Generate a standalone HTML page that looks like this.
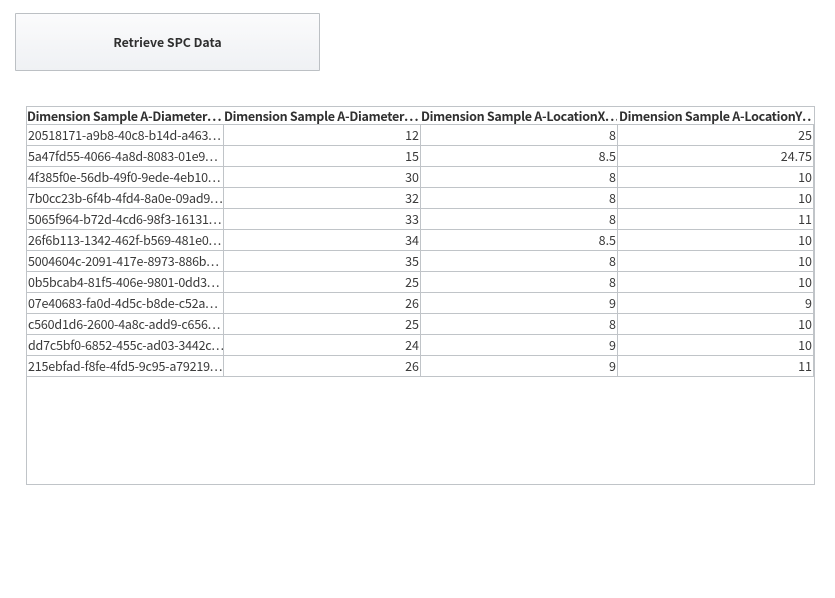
<!DOCTYPE html>
<html><head><meta charset="utf-8"><style>
html,body{margin:0;padding:0;background:#fff;width:835px;height:598px;overflow:hidden}
body{position:relative;font-family:"Noto Sans CJK SC","DejaVu Sans",sans-serif;color:#3a3a3a;font-size:12px}
.btn{position:absolute;left:15px;top:13px;width:303px;height:56px;border:1px solid #bcc0c4;border-radius:1px;background:linear-gradient(#fbfbfc,#eff1f4);text-align:center;line-height:56px;font-weight:bold;font-size:12.3px;color:#2f2f2f}
.tbl{position:absolute;left:26px;top:106px;width:787px;height:377px;border:1px solid #c0c4c8;box-sizing:content-box}
.h,.c,.r{position:absolute;white-space:nowrap;overflow:hidden;height:20px;line-height:20px}
.hb{position:absolute;left:27px;top:107px;width:786px;height:17px;background:#fff;border-bottom:1px solid #c0c4c8}
.h{font-weight:bold;font-size:12.5px;letter-spacing:-.28px;top:107px;height:17px;line-height:18px;color:#303030}
.c{font-size:12.5px;letter-spacing:-.2px;left:28px;width:195px}
.r{text-align:right;font-size:12.5px}
.e{letter-spacing:1.1px}
.lh{position:absolute;left:27px;width:786px;height:1px;background:#c0c4c8}
.lv{position:absolute;top:124px;width:1px;height:253px;background:#c0c4c8}
</style></head><body>
<div class="btn">Retrieve SPC Data</div>
<div class="tbl"></div>
<div class="hb"></div>
<div class="h" style="left:27px;width:196px">Dimension Sample A-Diameter<span class="e">....</span></div>
<div class="h" style="left:224px;width:196px">Dimension Sample A-Diameter<span class="e">....</span></div>
<div class="h" style="left:421px;width:196px">Dimension Sample A-LocationX<span class="e">...</span></div>
<div class="h" style="left:619px;width:194px">Dimension Sample A-LocationY<span class="e">...</span></div>
<div class="lv" style="left:223px"></div><div class="lv" style="left:420px"></div><div class="lv" style="left:617px"></div><div class="lv" style="left:813px"></div>
<div class="lh" style="top:145px"></div><div class="lh" style="top:166px"></div><div class="lh" style="top:187px"></div><div class="lh" style="top:208px"></div><div class="lh" style="top:229px"></div><div class="lh" style="top:250px"></div><div class="lh" style="top:271px"></div><div class="lh" style="top:292px"></div><div class="lh" style="top:313px"></div><div class="lh" style="top:334px"></div><div class="lh" style="top:355px"></div><div class="lh" style="top:376px"></div>

<div class="c" style="top:125px">20518171-a9b8-40c8-b14d-a463<span class="e">...</span></div>
<div class="c" style="top:146px">5a47fd55-4066-4a8d-8083-01e9<span class="e">...</span></div>
<div class="c" style="top:167px">4f385f0e-56db-49f0-9ede-4eb10<span class="e">...</span></div>
<div class="c" style="top:188px">7b0cc23b-6f4b-4fd4-8a0e-09ad9<span class="e">...</span></div>
<div class="c" style="top:209px">5065f964-b72d-4cd6-98f3-16131<span class="e">...</span></div>
<div class="c" style="top:230px">26f6b113-1342-462f-b569-481e0<span class="e">...</span></div>
<div class="c" style="top:251px">5004604c-2091-417e-8973-886b<span class="e">...</span></div>
<div class="c" style="top:272px">0b5bcab4-81f5-406e-9801-0dd3<span class="e">...</span></div>
<div class="c" style="top:293px">07e40683-fa0d-4d5c-b8de-c52a<span class="e">...</span></div>
<div class="c" style="top:314px">c560d1d6-2600-4a8c-add9-c656<span class="e">...</span></div>
<div class="c" style="top:335px">dd7c5bf0-6852-455c-ad03-3442c<span class="e">...</span></div>
<div class="c" style="top:356px">215ebfad-f8fe-4fd5-9c95-a79219<span class="e">...</span></div>

<div class="r" style="top:125px;left:224px;width:195px">12</div><div class="r" style="top:125px;left:421px;width:195px">8</div><div class="r" style="top:125px;left:618px;width:194px">25</div>
<div class="r" style="top:146px;left:224px;width:195px">15</div><div class="r" style="top:146px;left:421px;width:195px">8.5</div><div class="r" style="top:146px;left:618px;width:194px">24.75</div>
<div class="r" style="top:167px;left:224px;width:195px">30</div><div class="r" style="top:167px;left:421px;width:195px">8</div><div class="r" style="top:167px;left:618px;width:194px">10</div>
<div class="r" style="top:188px;left:224px;width:195px">32</div><div class="r" style="top:188px;left:421px;width:195px">8</div><div class="r" style="top:188px;left:618px;width:194px">10</div>
<div class="r" style="top:209px;left:224px;width:195px">33</div><div class="r" style="top:209px;left:421px;width:195px">8</div><div class="r" style="top:209px;left:618px;width:194px">11</div>
<div class="r" style="top:230px;left:224px;width:195px">34</div><div class="r" style="top:230px;left:421px;width:195px">8.5</div><div class="r" style="top:230px;left:618px;width:194px">10</div>
<div class="r" style="top:251px;left:224px;width:195px">35</div><div class="r" style="top:251px;left:421px;width:195px">8</div><div class="r" style="top:251px;left:618px;width:194px">10</div>
<div class="r" style="top:272px;left:224px;width:195px">25</div><div class="r" style="top:272px;left:421px;width:195px">8</div><div class="r" style="top:272px;left:618px;width:194px">10</div>
<div class="r" style="top:293px;left:224px;width:195px">26</div><div class="r" style="top:293px;left:421px;width:195px">9</div><div class="r" style="top:293px;left:618px;width:194px">9</div>
<div class="r" style="top:314px;left:224px;width:195px">25</div><div class="r" style="top:314px;left:421px;width:195px">8</div><div class="r" style="top:314px;left:618px;width:194px">10</div>
<div class="r" style="top:335px;left:224px;width:195px">24</div><div class="r" style="top:335px;left:421px;width:195px">9</div><div class="r" style="top:335px;left:618px;width:194px">10</div>
<div class="r" style="top:356px;left:224px;width:195px">26</div><div class="r" style="top:356px;left:421px;width:195px">9</div><div class="r" style="top:356px;left:618px;width:194px">11</div>
</body></html>
